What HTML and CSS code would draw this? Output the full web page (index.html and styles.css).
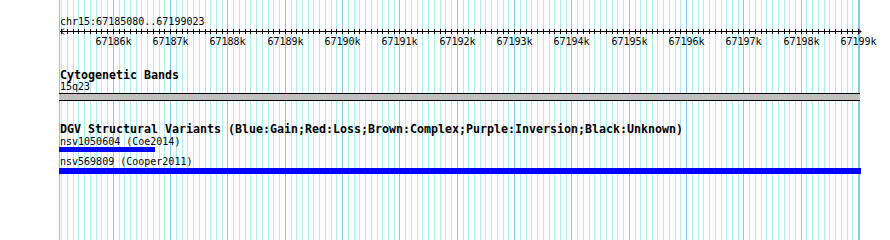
FILE: index.html
```html
<!DOCTYPE html>
<html>
<head>
<meta charset="utf-8">
<link rel="stylesheet" href="styles.css">
</head>
<body>
<div class="browser" data-start="67185080" data-end="67199023">
  <svg class="grid" id="grid" width="890" height="240" xmlns="http://www.w3.org/2000/svg"></svg>
  <div class="tracks">
    <div class="seg-label">chr15:67185080..67199023</div>
    <svg class="ruler" id="ruler" width="890" height="20" xmlns="http://www.w3.org/2000/svg"></svg>
    <section class="track band-track">
      <div class="track-title">Cytogenetic Bands</div>
      <div class="feat-label">15q23</div>
      <div class="band"></div>
    </section>
    <section class="track dgv-track">
      <div class="track-title">DGV Structural Variants (Blue:Gain;Red:Loss;Brown:Complex;Purple:Inversion;Black:Unknown)</div>
      <div class="feat-label">nsv1050604 (Coe2014)</div>
      <div class="sv-bar gain" style="width:96px"></div>
      <div class="feat-label gap">nsv569809 (Cooper2011)</div>
      <div class="sv-bar gain tall" style="width:802px"></div>
    </section>
  </div>
</div>
<script src="script.js"></script>
</body>
</html>
```
FILE: styles.css
```css
html, body {
  margin: 0;
  padding: 0;
  background: #ffffff;
}
.browser {
  position: relative;
  width: 890px;
  height: 240px;
  overflow: hidden;
  background: #ffffff;
  font-family: "DejaVu Sans Mono", "Liberation Mono", monospace;
  color: #000;
}
.grid {
  position: absolute;
  left: 0;
  top: 0;
  z-index: 0;
}
.grid .minor { stroke: #aeeeee; stroke-width: 1; }
.grid .major { stroke: #88c8ea; stroke-width: 1; }
.tracks {
  position: relative;
  z-index: 1;
  padding-top: 15px;
}
.seg-label {
  padding-left: 60px;
  font-size: 10px;
  line-height: 13px;
  height: 13px;
  white-space: nowrap;
}
.ruler {
  display: block;
}
.ruler .axis { stroke: #000; stroke-width: 1; fill: none; }
.ruler .tick-label {
  font-family: "DejaVu Sans Mono", "Liberation Mono", monospace;
  font-size: 10px;
  fill: #000;
}
.track {
  padding-left: 59px;
}
.track-title {
  padding-left: 1px;
  font-weight: bold;
  font-size: 11.63px;
  line-height: 12px;
  height: 12px;
  white-space: nowrap;
}
.feat-label {
  padding-left: 1px;
  font-size: 10px;
  line-height: 11px;
  height: 11px;
  white-space: nowrap;
}
.band-track {
  margin-top: 21px;
}
.band {
  margin-top: 1px;
  width: 801px;
  height: 6px;
  background: #c0c0c0;
  border-top: 1px solid #000;
  border-bottom: 1px solid #000;
}
.dgv-track {
  margin-top: 22px;
}
.dgv-track .feat-label {
  margin-top: 1px;
}
.dgv-track .feat-label.gap {
  margin-top: 4px;
}
.sv-bar {
  height: 5px;
}
.sv-bar.tall {
  margin-top: 1px;
  height: 6px;
}
.sv-bar.gain {
  background: #0000ff;
}
```
FILE: script.js
```js
(function () {
  var NS = "http://www.w3.org/2000/svg";
  var root = document.querySelector(".browser");
  var start = +root.dataset.start;
  var x0 = 60.56, scale = 0.05733;
  function xpos(bp) { return x0 + (bp - start) * scale; }

  var grid = document.getElementById("grid");
  function line(svg, x1, y1, x2, y2, cls) {
    var l = document.createElementNS(NS, "line");
    l.setAttribute("x1", x1); l.setAttribute("y1", y1);
    l.setAttribute("x2", x2); l.setAttribute("y2", y2);
    if (cls) l.setAttribute("class", cls);
    svg.appendChild(l);
    return l;
  }
  var first = Math.ceil(start / 100) * 100;
  for (var bp = first; bp <= 67199000; bp += 100) {
    var x = Math.floor(xpos(bp)) + 0.5;
    line(grid, x, 0, x, 240, bp % 1000 === 0 ? "major" : "minor");
  }
  line(grid, 59.5, 0, 59.5, 240, "major");
  line(grid, 859.5, 0, 859.5, 240, "major");

  var ruler = document.getElementById("ruler");
  var y = 3.5;
  line(ruler, 60, y, 861, y, "axis");
  var p = document.createElementNS(NS, "polyline");
  p.setAttribute("points", "64,0.5 61,3.5 64,6.5");
  p.setAttribute("class", "axis");
  ruler.appendChild(p);
  var q = document.createElementNS(NS, "polyline");
  q.setAttribute("points", "858,0.5 861,3.5 858,6.5");
  q.setAttribute("class", "axis");
  ruler.appendChild(q);
  for (var b = first; b <= 67199000; b += 100) {
    var tx = Math.floor(xpos(b)) + 0.5;
    line(ruler, tx, 1, tx, 6, "axis");
    if (b % 1000 === 0) {
      var t = document.createElementNS(NS, "text");
      t.setAttribute("x", Math.floor(xpos(b)) + 0.5);
      t.setAttribute("y", 17);
      t.setAttribute("text-anchor", "middle");
      t.setAttribute("class", "tick-label");
      t.textContent = (b / 1000) + "k";
      ruler.appendChild(t);
    }
  }
})();
```
